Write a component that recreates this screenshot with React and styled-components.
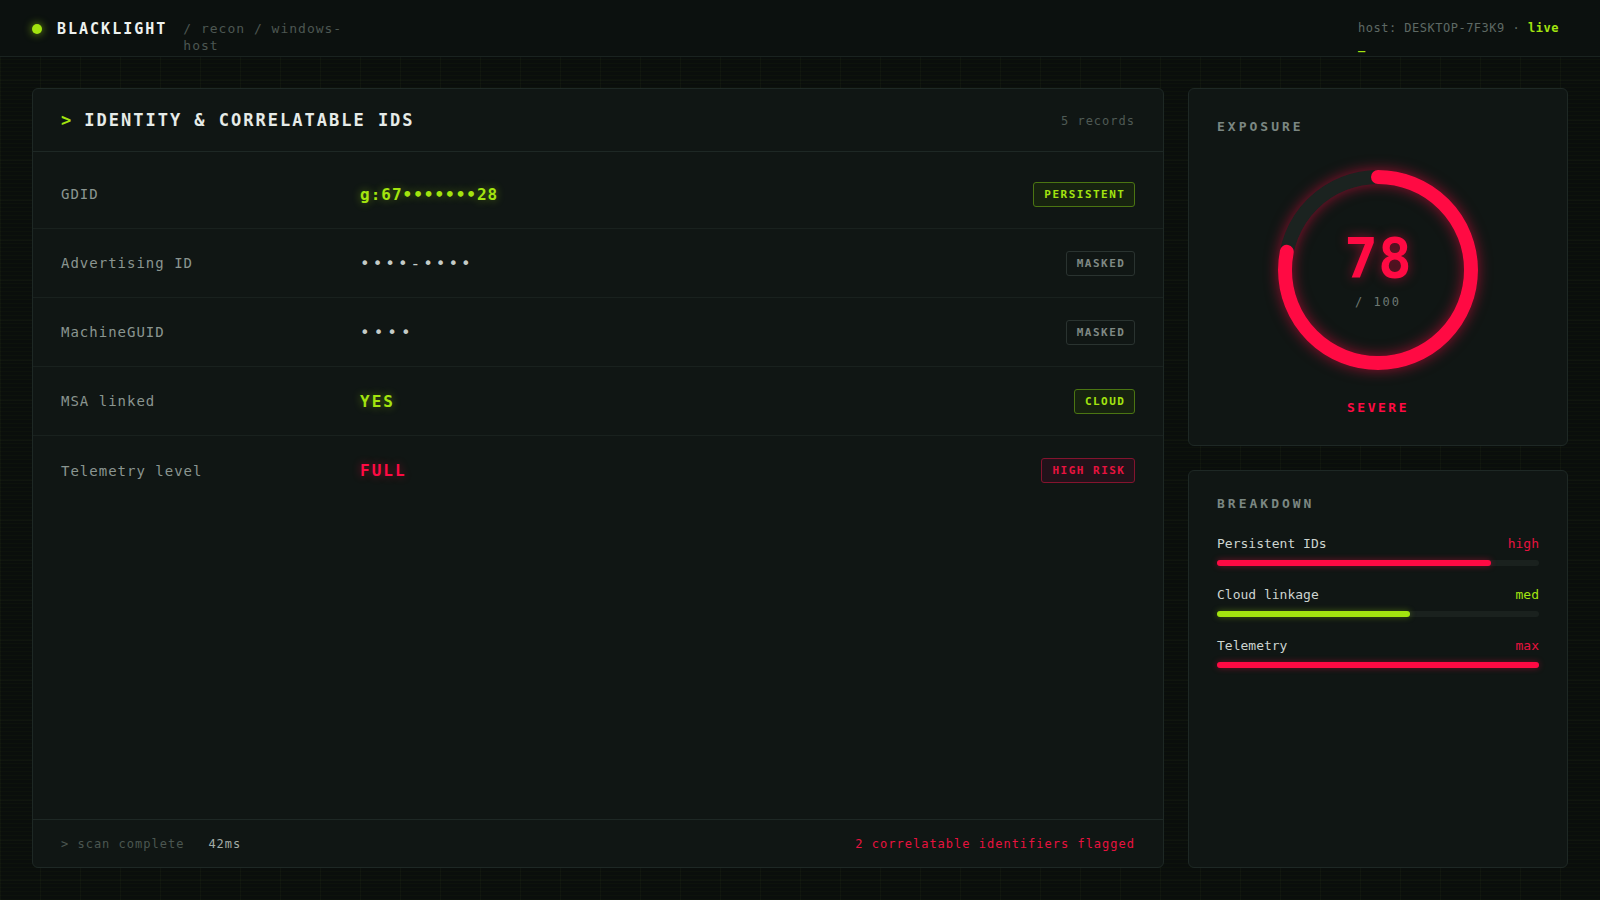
import React from "react";
import styled, { createGlobalStyle } from "styled-components";

const LIME = "#a3e40f";
const RED = "#ff0a43";
const MONO = `"DejaVu Sans Mono", "Liberation Mono", monospace`;

const Global = createGlobalStyle`
  * { box-sizing: border-box; }
  html, body { margin: 0; padding: 0; }
  body {
    width: 1600px;
    height: 900px;
    overflow: hidden;
    font-family: ${MONO};
    color: #c9d1cd;
    background-color: #0a0e0c;
    background-image:
      repeating-linear-gradient(0deg, rgba(163, 228, 15, 0.018) 0 1px, transparent 1px 4px),
      linear-gradient(rgba(140, 190, 90, 0.045) 1px, transparent 1px),
      linear-gradient(90deg, rgba(140, 190, 90, 0.045) 1px, transparent 1px);
    background-size: 100% 4px, 40px 40px, 40px 40px;
  }
`;

const Page = styled.div`
  display: flex;
  flex-direction: column;
  height: 900px;
`;

const Header = styled.header`
  height: 57px;
  flex: none;
  display: flex;
  align-items: flex-start;
  justify-content: space-between;
  padding: 20px 32px 0;
  background: #0c110f;
  border-bottom: 1px solid #1a2320;
`;

const Brand = styled.div`
  display: flex;
  align-items: flex-start;
`;

const StatusDot = styled.span`
  width: 10px;
  height: 10px;
  margin-top: 4px;
  border-radius: 50%;
  background: ${LIME};
  box-shadow: 0 0 8px rgba(163, 228, 15, 0.7);
  margin-right: 15px;
`;

const BrandName = styled.span`
  font-size: 15px;
  line-height: 18px;
  font-weight: 700;
  letter-spacing: 2px;
  color: #eef2ef;
  margin-right: 16px;
`;

const Crumb = styled.span`
  max-width: 180px;
  font-size: 13px;
  line-height: 17px;
  letter-spacing: 1px;
  color: #4c5752;
`;

const HostInfo = styled.div`
  width: 210px;
  font-size: 12px;
  line-height: 17px;
  letter-spacing: 0.5px;
  color: #5e6964;
`;

const Live = styled.span`
  color: ${LIME};
  font-weight: 700;
`;

const Main = styled.main`
  flex: 1;
  display: grid;
  grid-template-columns: 1fr 380px;
  gap: 24px;
  padding: 31px 32px 32px;
  min-height: 0;
`;

const Card = styled.section`
  background: #101614;
  border: 1px solid #1e2825;
  border-radius: 6px;
  display: flex;
  flex-direction: column;
  min-height: 0;
`;

const CardHead = styled.div`
  display: flex;
  align-items: center;
  justify-content: space-between;
  padding: 21px 28px 20px;
  border-bottom: 1px solid #1e2825;
`;

const CardTitle = styled.h1`
  margin: 0;
  font-size: 17px;
  line-height: 21px;
  font-weight: 700;
  letter-spacing: 2px;
  color: #e6ebe8;
`;

const Prompt = styled.span`
  color: ${LIME};
  margin-right: 11px;
`;

const Meta = styled.span`
  font-size: 12px;
  letter-spacing: 1px;
  color: #4f5a55;
`;

const Rows = styled.div`
  padding-top: 8px;
  flex: 1;
`;

const Row = styled.div`
  display: grid;
  grid-template-columns: 299px 1fr auto;
  align-items: center;
  height: 69px;
  padding: 0 28px;
  border-bottom: 1px solid #19211e;
  &:last-child { border-bottom: none; }
`;

const Label = styled.span`
  font-size: 14px;
  letter-spacing: 1px;
  color: #8a9590;
`;

const tones = {
  lime: { color: LIME, glow: "0 0 8px rgba(163, 228, 15, 0.45)" },
  red: { color: RED, glow: "0 0 8px rgba(255, 10, 67, 0.45)" },
  mask: { color: "#c5ccc8", glow: "none" },
};

const Value = styled.span`
  font-size: 16px;
  font-weight: ${(p) => (p.$tone === "mask" ? 400 : 700)};
  letter-spacing: ${(p) => p.$ls}px;
  color: ${(p) => tones[p.$tone].color};
  text-shadow: ${(p) => tones[p.$tone].glow};
`;

const badgeStyles = {
  lime: { color: LIME, border: "#4b7512", bg: "#17230f" },
  mask: { color: "#7f8984", border: "#2a3330", bg: "transparent" },
  red: { color: "#e8123f", border: "#84142e", bg: "#22121a" },
};

const Badge = styled.span`
  display: inline-block;
  font-size: 11px;
  line-height: 13px;
  font-weight: 700;
  letter-spacing: 1.5px;
  padding: 5px 8.5px 5px 10px;
  border-radius: 3px;
  border: 1px solid ${(p) => badgeStyles[p.$tone].border};
  background: ${(p) => badgeStyles[p.$tone].bg};
  color: ${(p) => badgeStyles[p.$tone].color};
`;

const Footer = styled.div`
  display: flex;
  align-items: center;
  justify-content: space-between;
  padding: 16px 28px 14px;
  border-top: 1px solid #1e2825;
  font-size: 12px;
  line-height: 17px;
  letter-spacing: 1px;
`;

const FooterLeft = styled.div`
  display: flex;
  gap: 24px;
`;

const Dim = styled.span`
  color: #4b5651;
`;

const Soft = styled.span`
  color: #a2aca7;
`;

const Flag = styled.span`
  color: #e8123f;
`;

const Side = styled.div`
  display: flex;
  flex-direction: column;
  gap: 24px;
  min-height: 0;
`;

const Panel = styled(Card)`
  padding: ${(p) => p.$top}px 28px 28px;
  flex: ${(p) => (p.$grow ? 1 : "none")};
`;

const PanelTitle = styled.h2`
  margin: 0;
  font-size: 13px;
  line-height: 18px;
  font-weight: 700;
  letter-spacing: 3px;
  color: #7b8782;
`;

const GaugeWrap = styled.div`
  position: relative;
  align-self: center;
  width: 200px;
  height: 200px;
  margin-top: 34px;
`;

const GaugeSvg = styled.svg`
  display: block;
  overflow: visible;
  filter: drop-shadow(0 0 7px rgba(255, 10, 67, 0.55));
`;

const GaugeCenter = styled.div`
  position: absolute;
  inset: 0;
  display: flex;
  flex-direction: column;
  align-items: center;
  justify-content: center;
`;

const Score = styled.span`
  font-size: 56px;
  line-height: 56px;
  font-weight: 700;
  color: ${RED};
  text-shadow: 0 0 12px rgba(255, 10, 67, 0.5);
`;

const OutOf = styled.span`
  margin-top: 8px;
  font-size: 12px;
  line-height: 16px;
  letter-spacing: 2px;
  color: #6d7873;
`;

const Severity = styled.div`
  margin-top: 29px;
  text-align: center;
  font-size: 13px;
  line-height: 18px;
  font-weight: 700;
  letter-spacing: 2.5px;
  color: ${RED};
`;

const Metrics = styled.div`
  margin-top: 22px;
  display: flex;
  flex-direction: column;
  gap: 20px;
`;

const Metric = styled.div`
  display: flex;
  flex-direction: column;
  gap: 7px;
`;

const MetricHead = styled.div`
  display: flex;
  justify-content: space-between;
  font-size: 13px;
  line-height: 18px;
`;

const MetricName = styled.span`
  color: #cdd4d0;
`;

const MetricLevel = styled.span`
  color: ${(p) => (p.$tone === "lime" ? LIME : "#e8123f")};
`;

const Track = styled.div`
  height: 6px;
  border-radius: 3px;
  background: #1a211e;
`;

const Fill = styled.div`
  height: 100%;
  border-radius: 3px;
  background: ${(p) => (p.$tone === "lime" ? LIME : RED)};
  box-shadow: 0 0 6px ${(p) => (p.$tone === "lime" ? "rgba(163,228,15,0.35)" : "rgba(255,10,67,0.4)")};
`;

const records = [
  { label: "GDID", value: "g:67•••••••28", tone: "lime", ls: 1, badge: "PERSISTENT", badgeTone: "lime" },
  { label: "Advertising ID", value: "••••‑••••", tone: "mask", ls: 3, badge: "MASKED", badgeTone: "mask" },
  { label: "MachineGUID", value: "••••", tone: "mask", ls: 4, badge: "MASKED", badgeTone: "mask" },
  { label: "MSA linked", value: "YES", tone: "lime", ls: 2, badge: "CLOUD", badgeTone: "lime" },
  { label: "Telemetry level", value: "FULL", tone: "red", ls: 2, badge: "HIGH RISK", badgeTone: "red" },
];

const metrics = [
  { name: "Persistent IDs", level: "high", tone: "red", pct: 85 },
  { name: "Cloud linkage", level: "med", tone: "lime", pct: 60 },
  { name: "Telemetry", level: "max", tone: "red", pct: 100 },
];

function Gauge({ score }) {
  const r = 93;
  const c = 2 * Math.PI * r;
  const len = (score / 100) * c;
  return (
    <GaugeWrap>
      <GaugeSvg width="200" height="200" viewBox="0 0 200 200">
        <circle cx="100" cy="100" r={r} fill="none" stroke="#1b2320" strokeWidth="14" />
        <circle
          cx="100"
          cy="100"
          r={r}
          fill="none"
          stroke={RED}
          strokeWidth="14"
          strokeLinecap="round"
          strokeDasharray={`${len} ${c}`}
          transform="rotate(-90 100 100)"
        />
      </GaugeSvg>
      <GaugeCenter>
        <Score>{score}</Score>
        <OutOf>/ 100</OutOf>
      </GaugeCenter>
    </GaugeWrap>
  );
}

export default function App() {
  return (
    <>
      <Global />
      <Page>
        <Header>
          <Brand>
            <StatusDot />
            <BrandName>BLACKLIGHT</BrandName>
            <Crumb>/ recon / windows-host</Crumb>
          </Brand>
          <HostInfo>
            host: DESKTOP-7F3K9 · <Live>live</Live> <Live>_</Live>
          </HostInfo>
        </Header>
        <Main>
          <Card>
            <CardHead>
              <CardTitle>
                <Prompt>&gt;</Prompt>IDENTITY &amp; CORRELATABLE IDS
              </CardTitle>
              <Meta>5 records</Meta>
            </CardHead>
            <Rows>
              {records.map((r) => (
                <Row key={r.label}>
                  <Label>{r.label}</Label>
                  <Value $tone={r.tone} $ls={r.ls}>{r.value}</Value>
                  <Badge $tone={r.badgeTone}>{r.badge}</Badge>
                </Row>
              ))}
            </Rows>
            <Footer>
              <FooterLeft>
                <Dim>&gt; scan complete</Dim>
                <Soft>42ms</Soft>
              </FooterLeft>
              <Flag>2 correlatable identifiers flagged</Flag>
            </Footer>
          </Card>
          <Side>
            <Panel $top={29}>
              <PanelTitle>EXPOSURE</PanelTitle>
              <Gauge score={78} />
              <Severity>SEVERE</Severity>
            </Panel>
            <Panel $top={24} $grow>
              <PanelTitle>BREAKDOWN</PanelTitle>
              <Metrics>
                {metrics.map((m) => (
                  <Metric key={m.name}>
                    <MetricHead>
                      <MetricName>{m.name}</MetricName>
                      <MetricLevel $tone={m.tone}>{m.level}</MetricLevel>
                    </MetricHead>
                    <Track>
                      <Fill $tone={m.tone} style={{ width: `${m.pct}%` }} />
                    </Track>
                  </Metric>
                ))}
              </Metrics>
            </Panel>
          </Side>
        </Main>
      </Page>
    </>
  );
}
